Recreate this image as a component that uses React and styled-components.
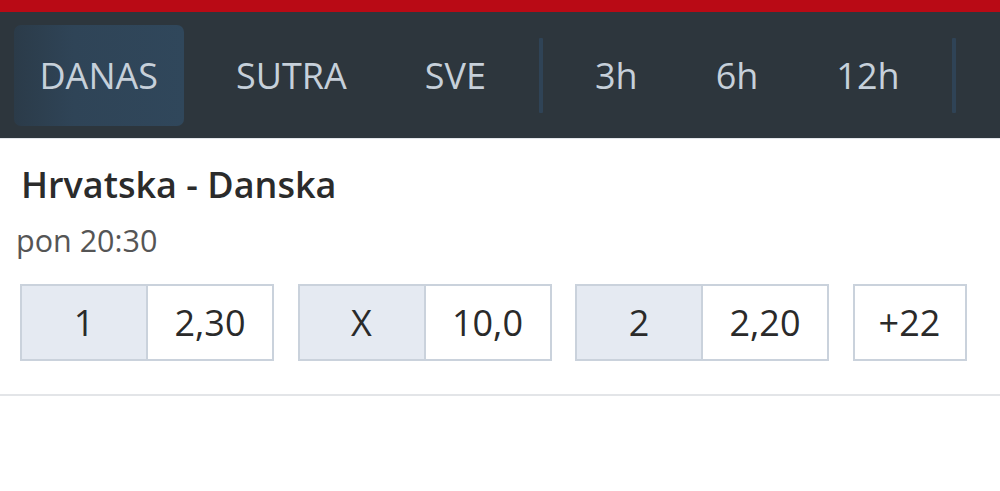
import React from "react";
import styled, { createGlobalStyle } from "styled-components";

const GlobalStyle = createGlobalStyle`
  html, body {
    margin: 0;
    padding: 0;
    background: #ffffff;
    font-family: "Open Sans", "Noto Sans", sans-serif;
  }
`;

const Page = styled.div`
  width: 1000px;
  min-height: 491px;
  background: #fff;
`;

const TopStrip = styled.div`
  height: 12px;
  background: #b90a15;
`;

const NavBar = styled.nav`
  height: 126px;
  background: #2d363d;
  display: flex;
  align-items: center;
  gap: 27px;
  padding: 0 14px;
  box-sizing: border-box;
`;

const Tab = styled.button`
  height: 101px;
  padding: 0 25.5px;
  border: none;
  border-radius: 7px;
  font-family: inherit;
  font-size: 36px;
  font-weight: 400;
  color: #c6d0da;
  cursor: pointer;
  background: ${(p) =>
    p.$active
      ? "linear-gradient(90deg, #2b3b49 0%, #2f4457 35%, #30475b 100%)"
      : "transparent"};
`;

const Divider = styled.span`
  width: 4px;
  height: 75px;
  background: #2f4356;
  border-radius: 1px;
`;

const EventCard = styled.section`
  border-top: 1px solid #e2e6ea;
  border-bottom: 2px solid #e3e5e8;
  padding: 25px 20px 33px;
`;

const Title = styled.h2`
  margin: 0 0 0 1px;
  font-size: 36px;
  line-height: 42px;
  font-weight: 600;
  color: #2b2b2b;
`;

const Time = styled.div`
  margin: 16px 0 0 -4px;
  font-size: 30.5px;
  line-height: 36px;
  color: #555;
`;

const OddsRow = styled.div`
  display: flex;
  gap: 23.5px;
  margin-top: 26px;
`;

const OddGroup = styled.div`
  display: flex;
  width: 254px;
  height: 77px;
  box-sizing: border-box;
  border: 2px solid #cad2dc;
`;

const Cell = styled.div`
  flex: 1;
  display: flex;
  align-items: center;
  justify-content: center;
  font-size: 36px;
  color: #2a2a2a;
  background: ${(p) => (p.$label ? "#e5eaf2" : "#ffffff")};
  border-right: ${(p) => (p.$label ? "2px solid #cad2dc" : "none")};
`;

const MoreButton = styled.div`
  width: 114px;
  height: 77px;
  box-sizing: border-box;
  border: 2px solid #cad2dc;
  display: flex;
  align-items: center;
  justify-content: center;
  font-size: 36px;
  color: #2a2a2a;
`;

const dayTabs = ["DANAS", "SUTRA", "SVE"];
const hourTabs = ["3h", "6h", "12h"];
const odds = [
  { label: "1", value: "2,30" },
  { label: "X", value: "10,0" },
  { label: "2", value: "2,20" },
];

export default function App() {
  return (
    <>
      <GlobalStyle />
      <Page>
        <TopStrip />
        <NavBar>
          {dayTabs.map((t, i) => (
            <Tab key={t} $active={i === 0}>
              {t}
            </Tab>
          ))}
          <Divider />
          {hourTabs.map((t) => (
            <Tab key={t}>{t}</Tab>
          ))}
          <Divider />
        </NavBar>
        <EventCard>
          <Title>Hrvatska - Danska</Title>
          <Time>pon 20:30</Time>
          <OddsRow>
            {odds.map((o) => (
              <OddGroup key={o.label}>
                <Cell $label>{o.label}</Cell>
                <Cell>{o.value}</Cell>
              </OddGroup>
            ))}
            <MoreButton>+22</MoreButton>
          </OddsRow>
        </EventCard>
      </Page>
    </>
  );
}
